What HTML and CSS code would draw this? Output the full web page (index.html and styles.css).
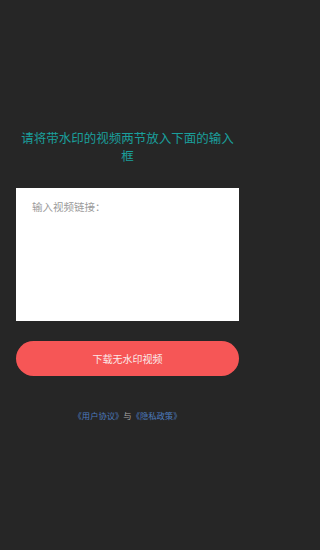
FILE: index.html
```html
<!DOCTYPE html>
<html lang="zh">
<head>
<meta charset="utf-8">
<meta name="viewport" content="width=255">
<link rel="stylesheet" href="styles.css">
</head>
<body>
<main class="page">
  <h1 class="title">请将带水印的视频两节放入下面的输入框</h1>
  <div class="input-box">
    <div class="placeholder">输入视频链接：</div>
  </div>
  <button class="download">下载无水印视频</button>
  <p class="terms"><span class="link">《用户协议》</span><span class="and">与</span><span class="link">《隐私政策》</span></p>
</main>
</body>
</html>
```

FILE: styles.css
```css
html, body {
  margin: 0;
  padding: 0;
  background: #262626;
  height: 100%;
}
.page {
  width: 255px;
  box-sizing: border-box;
  display: flex;
  flex-direction: column;
  align-items: stretch;
  padding: 129px 16px 0;
  font-family: "Noto Sans CJK SC", "Noto Sans", sans-serif;
}
.title {
  margin: 0;
  font-size: 12.5px;
  line-height: 18px;
  font-weight: 400;
  color: #1a9f9c;
  text-align: center;
}
.input-box {
  margin-top: 23px;
  height: 133px;
  background: #ffffff;
  box-sizing: border-box;
  padding: 12px 16px;
}
.placeholder {
  font-size: 10.5px;
  line-height: 14px;
  color: #9a9a9a;
}
.download {
  margin-top: 20px;
  height: 35px;
  border: none;
  border-radius: 18px;
  background: #f65656;
  color: #fbe9e9;
  font-family: "Noto Sans CJK SC", "Noto Sans", sans-serif;
  font-size: 10px;
  padding: 0;
}
.terms {
  margin: 33px 0 0;
  text-align: center;
  font-size: 8.3px;
  line-height: 12px;
}
.link {
  color: #4d7bbd;
}
.and {
  color: #a9a9a9;
}
```
